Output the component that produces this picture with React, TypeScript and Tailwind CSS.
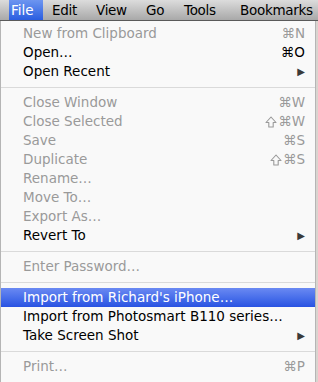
import React from 'react'

type Item =
  | { sep: true }
  | { label: string; key?: string; shift?: boolean; sub?: boolean; off?: boolean; hot?: boolean }

const items: Item[] = [
  { label: 'New from Clipboard', key: '⌘N', off: true },
  { label: 'Open…', key: '⌘O' },
  { label: 'Open Recent', sub: true },
  { sep: true },
  { label: 'Close Window', key: '⌘W', off: true },
  { label: 'Close Selected', key: '⌘W', shift: true, off: true },
  { label: 'Save', key: '⌘S', off: true },
  { label: 'Duplicate', key: '⌘S', shift: true, off: true },
  { label: 'Rename…', off: true },
  { label: 'Move To…', off: true },
  { label: 'Export As…', off: true },
  { label: 'Revert To', sub: true },
  { sep: true },
  { label: 'Enter Password…', off: true },
  { sep: true },
  { label: "Import from Richard's iPhone…", hot: true },
  { label: 'Import from Photosmart B110 series…' },
  { label: 'Take Screen Shot', sub: true },
  { sep: true },
  { label: 'Print…', key: '⌘P', off: true },
]

const bar = [
  { t: 'Edit', w: 'w-[44px]' },
  { t: 'View', w: 'w-[50px]' },
  { t: 'Go', w: 'w-[38px]' },
  { t: 'Tools', w: 'w-[56px]' },
  { t: 'Bookmarks', w: 'w-[78px]' },
]

const Shift = () => (
  <svg width="12" height="12" viewBox="0 0 12 12" className="mr-[1px]">
    <path d="M6 1 L11 6.5 H8.2 V11 H3.8 V6.5 H1 Z" fill="none" stroke="currentColor" strokeWidth="1.1" strokeLinejoin="round" />
  </svg>
)

const App = () => {
  return (
    <div className="w-[318px] h-[382px] overflow-hidden bg-[#d9d4cf] font-['DejaVu_Sans',sans-serif]">
      <div className="h-[21px] flex items-stretch bg-gradient-to-b from-[#dcdcdc] to-[#a9a9a9] border-b border-[#5a5a5a] text-[13.5px] text-black whitespace-nowrap">
        <div className="ml-[9px] w-[34px] pl-[2px] flex items-center text-white bg-gradient-to-b from-[#6d95f0] to-[#2a5de0]">File</div>
        <div className="ml-[9px] flex items-stretch">
          {bar.map((b) => (
            <div key={b.t} className={b.w + ' shrink-0 flex items-center tracking-[-0.3px]'}>{b.t}</div>
          ))}
        </div>
      </div>
      <div className="w-[316px] h-[361px] bg-[#fbfbfb]/95 border-l border-r border-[#b5b5b5] pt-[3px] text-[13.5px]">
        {items.map((it, i) =>
          'sep' in it ? (
            <div key={i} className="h-[12px] flex items-center">
              <div className="h-px w-full bg-[#dadada]" />
            </div>
          ) : (
            <div
              key={i}
              className={
                'h-[19px] flex items-center pl-[22px] pr-[10px] ' +
                (it.hot
                  ? 'bg-gradient-to-b from-[#6a89f2] to-[#2952e2] text-white'
                  : it.off
                  ? 'text-[#9a9a9a]'
                  : 'text-black')
              }
            >
              <span className="flex-1 whitespace-nowrap">{it.label}</span>
              {it.shift && <Shift />}
              {it.key && <span>{it.key}</span>}
              {it.sub && <span className="text-[10px] text-[#3a3a3a]">▶</span>}
            </div>
          )
        )}
      </div>
    </div>
  )
}

export default App
